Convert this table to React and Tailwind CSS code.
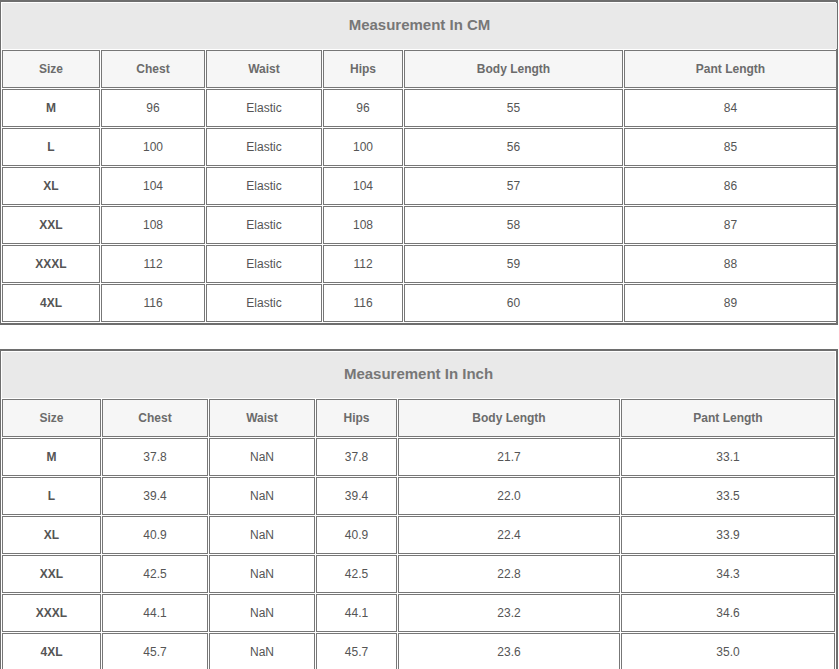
const cmRows = [
	["M", "96", "Elastic", "96", "55", "84"],
	["L", "100", "Elastic", "100", "56", "85"],
	["XL", "104", "Elastic", "104", "57", "86"],
	["XXL", "108", "Elastic", "108", "58", "87"],
	["XXXL", "112", "Elastic", "112", "59", "88"],
	["4XL", "116", "Elastic", "116", "60", "89"],
];

const inchRows = [
	["M", "37.8", "NaN", "37.8", "21.7", "33.1"],
	["L", "39.4", "NaN", "39.4", "22.0", "33.5"],
	["XL", "40.9", "NaN", "40.9", "22.4", "33.9"],
	["XXL", "42.5", "NaN", "42.5", "22.8", "34.3"],
	["XXXL", "44.1", "NaN", "44.1", "23.2", "34.6"],
	["4XL", "45.7", "NaN", "45.7", "23.6", "35.0"],
];

const headers = ["Size", "Chest", "Waist", "Hips", "Body Length", "Pant Length"];

function SizeTable({ title, rows, cols }) {
	return (
		<div className="w-[838px] border-2 border-l border-[#6e6e6e] p-px bg-white">
			<div className={`grid ${cols} gap-px`}>
				{/* Title bar */}
				<div className="col-span-6 h-[46px] pb-[2px] bg-[#e9e9e9] flex items-center justify-center text-[15px] font-bold text-[#777]">
					{title}
				</div>

				{/* Header row */}
				{headers.map((h) => (
					<div
						key={h}
						className="h-[38px] border border-[#777] bg-[#f6f6f6] flex items-center justify-center text-[12px] font-bold text-[#6b6b6b]"
					>
						{h}
					</div>
				))}

				{/* Body rows */}
				{rows.map((row) =>
					row.map((cell, i) => (
						<div
							key={row[0] + i}
							className={`h-[38px] border border-[#777] bg-white flex items-center justify-center text-[12px] text-[#555] ${
								i === 0 ? "font-bold" : ""
							}`}
						>
							{cell}
						</div>
					))
				)}
			</div>
		</div>
	);
}

export default function App() {
	return (
		<div className="w-[839px] h-[669px] overflow-hidden bg-white font-['Liberation_Sans',Arial,sans-serif]">
			<div className="flex flex-col gap-[24px]">
				<SizeTable
					title="Measurement In CM"
					rows={cmRows}
					cols="grid-cols-[98px_104px_116px_80px_219px_213px]"
				/>
				<SizeTable
					title="Measurement In Inch"
					rows={inchRows}
					cols="grid-cols-[99px_106px_106px_81px_222px_214px]"
				/>
			</div>
		</div>
	);
}
